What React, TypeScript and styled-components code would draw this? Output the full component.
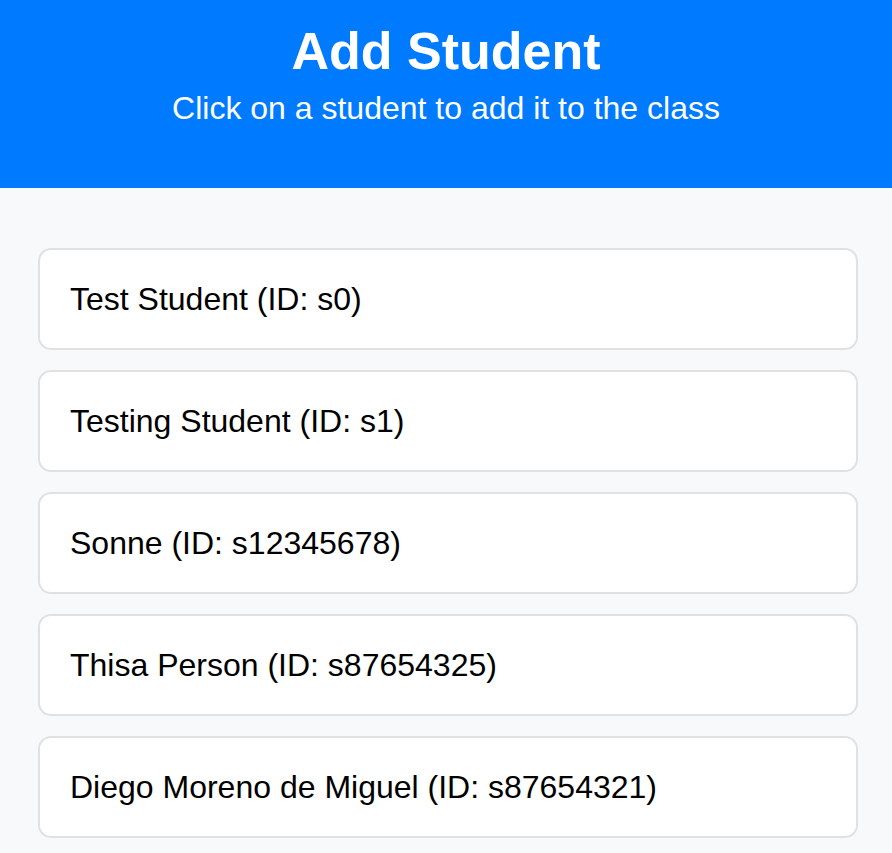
import React from "react";
import styled, { createGlobalStyle } from "styled-components";

const GlobalStyle = createGlobalStyle`
  html, body {
    margin: 0;
    padding: 0;
    background: #f8f9fa;
    font-family: "Liberation Sans", Arial, sans-serif;
  }
`;

const Page = styled.div`
  min-height: 853px;
  background: #f8f9fa;
`;

const Header = styled.header`
  background: #007bff;
  color: #ffffff;
  text-align: center;
  padding: 21px 0 61px;
`;

const Title = styled.h1`
  margin: 0 0 9px;
  font-size: 52px;
  font-weight: 700;
  line-height: 60px;
`;

const Subtitle = styled.p`
  margin: 0;
  font-size: 32px;
  line-height: 37px;
`;

const List = styled.ul`
  list-style: none;
  margin: 0;
  padding: 60px 34px 20px 38px;
  display: flex;
  flex-direction: column;
  gap: 20px;
`;

const Card = styled.li`
  background: #ffffff;
  border: 2px solid #dfe1e3;
  border-radius: 13px;
  padding: 32px 30px;
  font-size: 32px;
  line-height: 34px;
  color: #000000;
  cursor: pointer;
`;

const students = [
  { name: "Test Student", id: "s0" },
  { name: "Testing Student", id: "s1" },
  { name: "Sonne", id: "s12345678" },
  { name: "Thisa Person", id: "s87654325" },
  { name: "Diego Moreno de Miguel", id: "s87654321" },
];

export default function App() {
  return (
    <Page>
      <GlobalStyle />
      <Header>
        <Title>Add Student</Title>
        <Subtitle>Click on a student to add it to the class</Subtitle>
      </Header>
      <List>
        {students.map((s) => (
          <Card key={s.id}>
            {s.name} (ID: {s.id})
          </Card>
        ))}
      </List>
    </Page>
  );
}
